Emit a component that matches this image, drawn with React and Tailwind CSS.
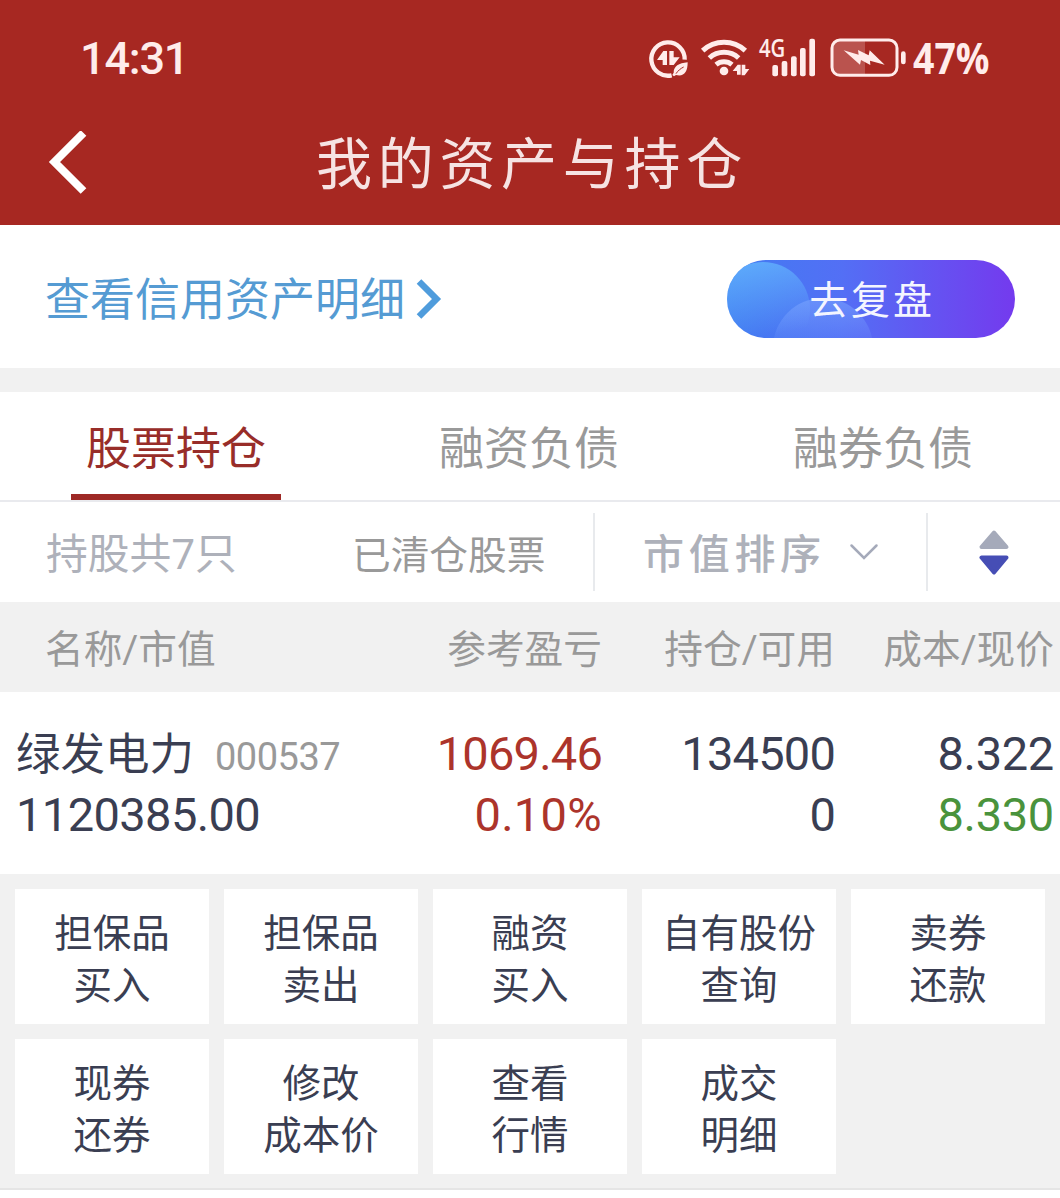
import React from "react";

const tabs = ["股票持仓", "融资负债", "融券负债"];

const actions = [
  ["担保品", "买入"],
  ["担保品", "卖出"],
  ["融资", "买入"],
  ["自有股份", "查询"],
  ["卖券", "还款"],
  ["现券", "还券"],
  ["修改", "成本价"],
  ["查看", "行情"],
  ["成交", "明细"],
];

const StatusIcons = () => (
  <div className="flex h-[65px] text-[#ffeceb]">
    {/* data saver */}
    <svg className="h-[65px] w-12" viewBox="24 0 144 195" fill="currentColor">
      <path d="M95 151A50 50 0 1 1 134 104" fill="none" stroke="currentColor" strokeWidth="13" />
      <path d="M51 105L70 78H81V120H68V105Z" />
      <path d="M119 97L101 120H88V78H101V97Z" />
      <path d="M143 112C116 114 101 124 101 143L97 150L102 154L108 150C131 156 143 142 143 112Z" />
      <path d="M108 146C114 137 121 131 131 126" fill="none" stroke="#a72822" strokeWidth="3" />
    </svg>
    {/* wifi */}
    <svg className="h-[65px] w-[59px]" viewBox="168 0 177 195" fill="currentColor">
      <g fill="none" stroke="currentColor" strokeWidth="15">
        <path d="M188 77A94 94 0 0 1 316 77" />
        <path d="M208 99A65 65 0 0 1 296 99" />
        <path d="M228 119A38 38 0 0 1 276 119" />
      </g>
      <circle cx="252" cy="138" r="13" />
      <path d="M278 138L293 119H302V149H291V138Z" />
      <path d="M328 132L314 151H305V119H316V132Z" />
    </svg>
    {/* 4G + signal */}
    <svg className="h-[65px] w-[70px]" viewBox="345 0 210 195" fill="currentColor">
      <text transform="translate(357 97) scale(.83 1)" fontSize="78" fontWeight="600" className="font-['Open_Sans',sans-serif]" textLength="95" lengthAdjust="spacingAndGlyphs">4G</text>
      <rect x="397" y="120" width="17" height="34" rx="6" />
      <rect x="425" y="108" width="17" height="46" rx="6" />
      <rect x="453" y="94" width="17" height="60" rx="6" />
      <rect x="480" y="69" width="17" height="85" rx="6" />
      <rect x="508" y="41" width="17" height="113" rx="6" />
    </svg>
    {/* battery */}
    <svg className="h-[65px] w-[88px]" viewBox="555 0 264 195" fill="currentColor">
      <path d="M600 46H675V150H600Q577 150 577 127V69Q577 46 600 46Z" fillOpacity=".22" />
      <rect x="576" y="45" width="195" height="106" rx="24" fill="none" stroke="currentColor" strokeWidth="9" />
      <rect x="783" y="79" width="14" height="39" rx="7" />
      <path d="M611 76L656 89L654 75L686 91L689 76L734 119L690 107L691 120L663 105L660 119Z" />
    </svg>
  </div>
);

const App = () => {
  return (
    <div className="h-[1198px] w-[1060px] overflow-hidden bg-white font-[Roboto,'Noto_Sans_CJK_SC',sans-serif] text-[#3a3e52]">
      <header className="h-[225px] bg-[#a72822]">
        <div className="flex h-[100px] items-start pt-[25px]">
          <div className="h-[65px] w-[568px] shrink-0 pl-[80px] text-[45px] leading-[67px] font-medium tracking-[-1.200px] text-[#ffeceb]">
            14:31
          </div>
          <div className="flex pl-[80px]">
            <StatusIcons />
            <span className="origin-left scale-x-[0.87] font-['Open_Sans',sans-serif] text-[43px] leading-[66px] font-bold text-[#ffeceb]">
              47%
            </span>
          </div>
        </div>
        <div className="flex h-[125px] items-center">
          <svg className="ml-[48px] h-[64px] w-[40px]" viewBox="0 0 40 64" fill="none" stroke="#fff" strokeWidth="8">
            <path d="M35.500 2L6.500 31L35.500 60" />
          </svg>
          <h1 className="ml-[228px] pt-1 text-[56px] leading-[80px] tracking-[5.700px] text-[#f6e3e3]">我的资产与持仓</h1>
        </div>
      </header>

      <section className="flex h-[143px] items-center justify-between pt-1 pr-[45px] pl-[45px]">
        <a className="flex items-center text-[45px] leading-[66px] text-[#559bd3]">
          <span className="pt-[5px]">查看信用资产明细</span>
          <svg className="ml-[11px] h-[40px] w-[26px]" viewBox="0 0 26 40" fill="none" stroke="#4f9cdc" strokeWidth="6.500">
            <path d="M3 2.500L20.500 20L3 37.500" />
          </svg>
        </a>
        <button className="relative h-[78px] w-[288px] overflow-hidden rounded-full">
          <svg className="absolute inset-0" width="288" height="78" viewBox="0 0 288 78">
            <defs>
              <linearGradient id="pill" x1="0" x2="1" y1="0" y2="0">
                <stop offset="0" stopColor="#417cf1" />
                <stop offset=".4" stopColor="#536ff5" />
                <stop offset="1" stopColor="#743aee" />
              </linearGradient>
              <linearGradient id="bubble" x1="0.300" x2=".5" y1="0" y2="1">
                <stop offset="0" stopColor="#66bbff" stopOpacity=".75" />
                <stop offset=".8" stopColor="#66bbff" stopOpacity="0" />
              </linearGradient>
              <linearGradient id="bubbleLow" x1="0" x2="0" y1="0" y2="1">
                <stop offset="0" stopColor="#7ba5ff" stopOpacity=".6" />
                <stop offset=".4" stopColor="#7ba5ff" stopOpacity=".15" />
              </linearGradient>
            </defs>
            <rect width="288" height="78" fill="url(#pill)" />
            <circle cx="36" cy="49" r="47" fill="url(#bubble)" />
            <circle cx="96" cy="88" r="50" fill="url(#bubbleLow)" />
          </svg>
          <span className="relative top-0.5 left-px text-[39px] leading-[78px] tracking-[2.800px] text-[#f4f5ff]">去复盘</span>
        </button>
      </section>

      <div className="h-6 bg-[#f1f1f1]" />

      <nav className="grid h-[110px] grid-cols-[352px_354px_354px] border-b-2 border-[#e9eaee]">
        {tabs.map((tab, i) => (
          <div key={tab} className="flex justify-center">
            <span
              className={
                i === 0
                  ? "h-[108px] w-[210px] border-b-[6px] border-[#9e2926] text-center text-[45px] leading-[116px] text-[#982d29]"
                  : "h-[108px] text-[45px] leading-[116px] text-[#999]"
              }
            >
              {tab}
            </span>
          </div>
        ))}
      </nav>

      <section className="flex h-[100px] items-center">
        <span className="w-[306px] pt-1.5 pl-[46px] text-[41.800px] text-[#aeb1ba]">持股共7只</span>
        <span className="w-[287px] pt-2 pl-[46px] text-[38.700px] text-[#999]">已清仓股票</span>
        <div className="flex h-[78px] w-[335px] items-center border-x-2 border-[#e8eaed] pl-[48px]">
          <span className="pt-2 text-[41px] font-medium tracking-[4.700px] text-[#aeb1ba]">市值排序</span>
          <svg className="ml-[23px] h-[18px] w-[30px]" viewBox="0 0 30 18" fill="none" stroke="#a5aaba" strokeWidth="2.500" strokeLinecap="round">
            <path d="M2.500 2.500L15 15L27.500 2.500" />
          </svg>
        </div>
        <svg className="ml-[50px] h-[46px] w-[32px]" viewBox="0 0 32 46" strokeWidth="4" strokeLinejoin="round">
          <path d="M16 3.500L28.500 18H3.500Z" fill="#a5aaba" stroke="#a5aaba" />
          <path d="M3.500 28.500H28.500L16 43.500Z" fill="#464eb5" stroke="#464eb5" />
        </svg>
      </section>

      <div className="flex h-[90px] items-center bg-[#f1f1f1] pt-1.5 text-[38.700px] whitespace-nowrap text-[#999]">
        <span className="w-[340px] pl-[45px]">名称/市值</span>
        <span className="w-[262px] text-right">参考盈亏</span>
        <span className="w-[233px] text-right">持仓/可用</span>
        <span className="w-[219px] text-right">成本/现价</span>
      </div>

      <section className="flex h-[182px] pt-[31px] text-[47px] leading-[61px] tracking-[-0.800px] whitespace-nowrap">
        <div className="w-[370px] pl-4">
          <div className="flex h-[61px] items-baseline">
            <span className="pt-0.5 text-[44.500px] tracking-normal">绿发电力</span>
            <span className="ml-[21px] text-[38px] tracking-[-0.500px] text-[#999]">000537</span>
          </div>
          <div className="tracking-[-0.600px]">1120385.00</div>
        </div>
        <div className="w-[232px] text-right text-[#ac342b]">
          <div>1069.46</div>
          <div className="tracking-[0.300px]">0.10%</div>
        </div>
        <div className="w-[233px] text-right">
          <div>134500</div>
          <div>0</div>
        </div>
        <div className="w-[219px] text-right tracking-[-0.300px]">
          <div>8.322</div>
          <div className="text-[#4a933c]">8.330</div>
        </div>
      </section>

      <section className="grid h-[316px] grid-cols-[repeat(5,194px)] grid-rows-[135px_135px] gap-[15px] border-b-2 border-[#e5e5e5] bg-[#f1f1f1] p-[15px]">
        {actions.map(([top, bottom]) => (
          <button key={top + bottom} className="flex flex-col items-center justify-center bg-white pt-[7px] text-[38.500px] leading-[52px]">
            <span>{top}</span>
            <span>{bottom}</span>
          </button>
        ))}
      </section>
    </div>
  );
};

export default App;
